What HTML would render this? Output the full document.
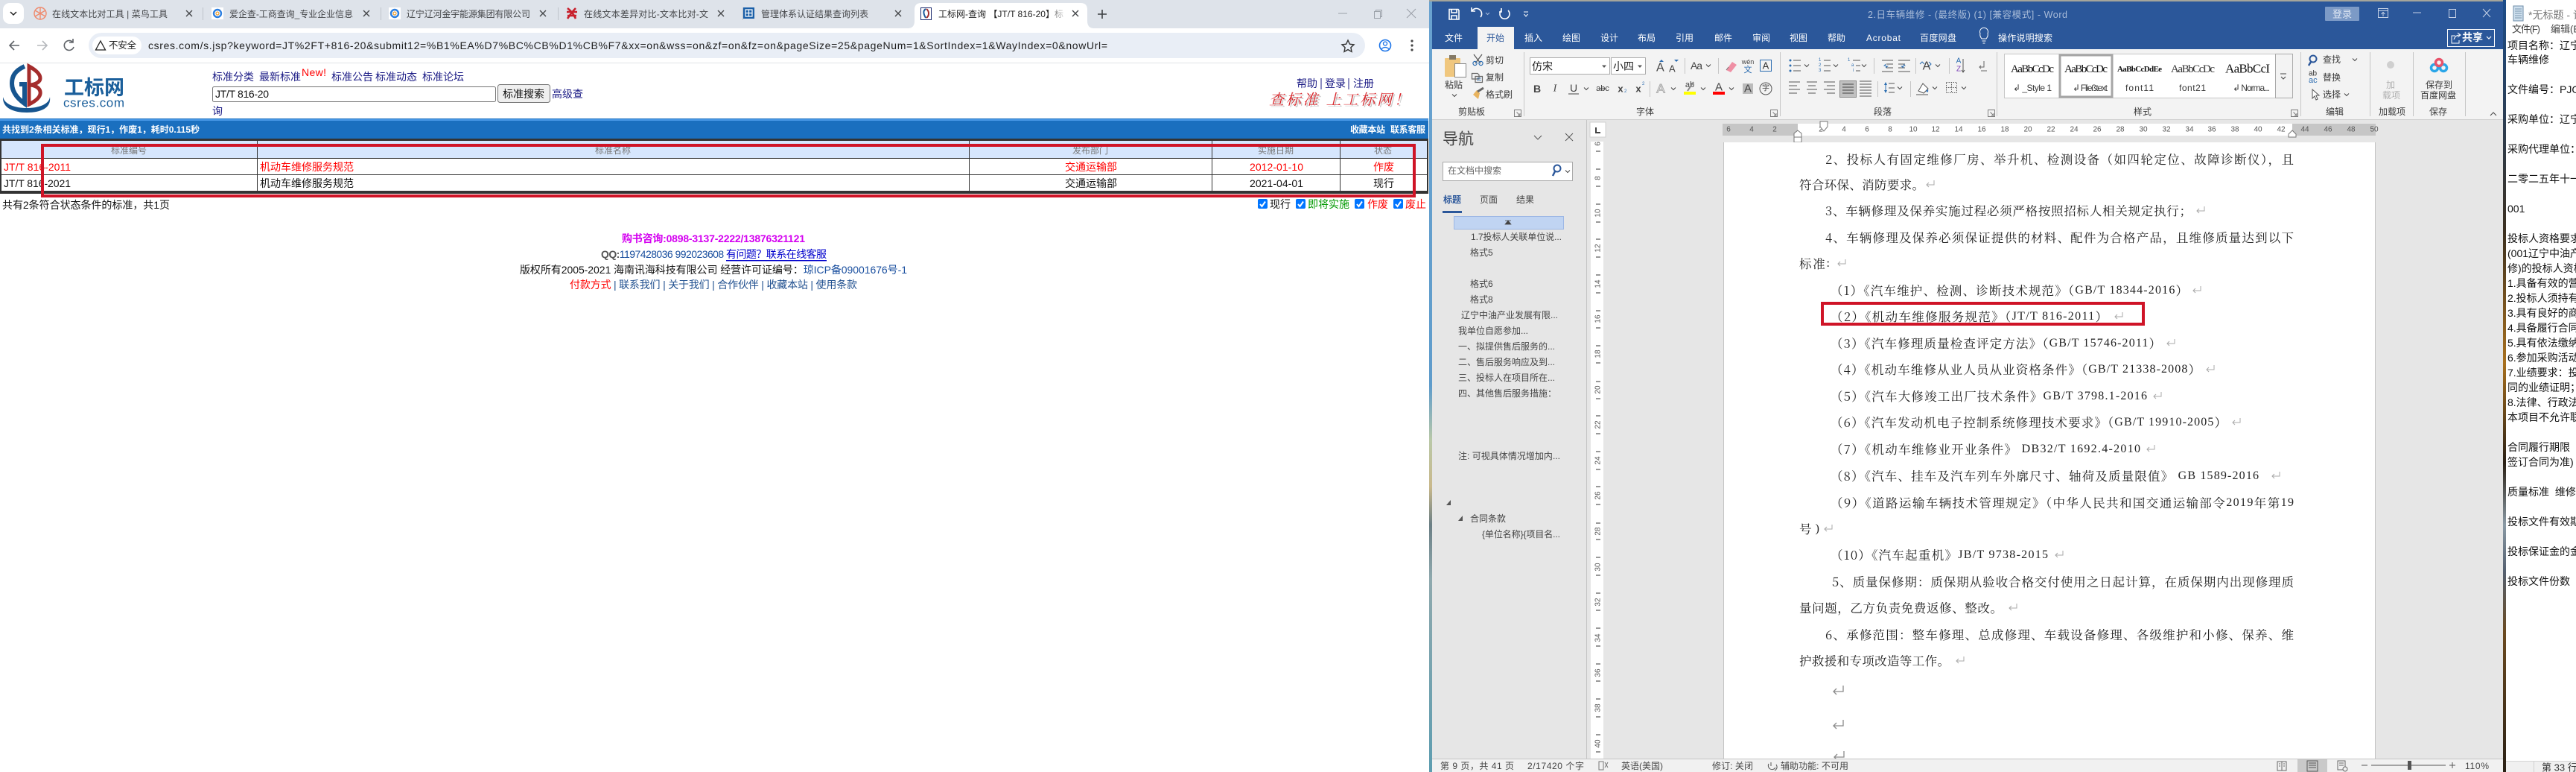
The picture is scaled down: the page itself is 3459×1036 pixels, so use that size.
<!DOCTYPE html>
<html lang="zh-CN"><head><meta charset="utf-8"><title>screenshot</title>
<style>
html,body{margin:0;padding:0;width:3459px;height:1036px;overflow:hidden;background:#fff}
svg{display:block;font-family:"Liberation Sans","Noto Sans CJK SC",sans-serif}
text{dominant-baseline:central;white-space:pre}
.m{font-family:"Liberation Serif",serif;font-size:16px}
.doc{font-family:"Noto Serif CJK SC",serif;font-size:16.5px;fill:#222}
.rib text{font-size:12px;fill:#3a3a3a}
.rul text{font-size:10px;fill:#555;text-anchor:middle}
.nav text{font-size:12px;fill:#444}
.np text{font-size:14px;fill:#111}
.tab text{font-size:12px;fill:#fff}
.st text{font-size:12px;fill:#444}
.tt text{font-size:12px;fill:#45474a}
</style></head><body>
<svg xmlns="http://www.w3.org/2000/svg" width="3459" height="1036" viewBox="0 0 3459 1036">
<defs>
<linearGradient id="w1" x1="0" y1="0" x2="0" y2="1"><stop offset="0" stop-color="#6aa3d0"/><stop offset=".5" stop-color="#5f9ccb"/><stop offset=".57" stop-color="#b9c8a8"/><stop offset=".63" stop-color="#c9b98c"/><stop offset=".68" stop-color="#6b7f85"/><stop offset=".75" stop-color="#8fa9ae"/><stop offset="1" stop-color="#5d9db0"/></linearGradient>
<linearGradient id="w2" x1="0" y1="0" x2="0" y2="1"><stop offset="0" stop-color="#1c4d8a"/><stop offset=".3" stop-color="#3c3020"/><stop offset=".47" stop-color="#a8701f"/><stop offset=".6" stop-color="#2a2015"/><stop offset=".68" stop-color="#8a9aa5"/><stop offset=".74" stop-color="#556070"/><stop offset=".82" stop-color="#6b4a20"/><stop offset="1" stop-color="#2a2015"/></linearGradient>
<linearGradient id="fade" x1="0" x2="1"><stop offset="0" stop-color="#fff" stop-opacity="0"/><stop offset="1" stop-color="#fff"/></linearGradient>
<path id="r" d="M5 -5V1H-5M-2 -2L-5 1L-2 4" fill="none" stroke="#a8a8a8" stroke-width="1"/>
<path id="rb" d="M6 -7V1H-7M-3 -3L-7 1L-3 5" fill="none" stroke="#8a8a8a" stroke-width="1.3"/>
<path id="c" d="M-3 -1.5L0 1.5L3 -1.5" fill="none" stroke="#444" stroke-width="1"/>
<path id="l" d="M-4.5 -4.5H4.5V4.5H-4.5ZM-1.5 -1.5L3 3M3 0V3H0" fill="none" stroke="#777" stroke-width=".9"/>
<g id="cb"><rect width="13" height="13" rx="2" fill="#0075ff"/><path d="M3 7L5.5 10L10 3.5" fill="none" stroke="#fff" stroke-width="2"/></g>
<path id="x" d="M-4 -4L4 4M4 -4L-4 4" fill="none" stroke="#45474a" stroke-width="1.4"/>
</defs>

<!-- BROWSER -->
<rect x="0" y="0" width="1919" height="38" fill="#dee3ea"/>
<rect x="0" y="38" width="1919" height="46" fill="#fff"/>
<rect x="0" y="84" width="1919" height="1" fill="#e1e3e6"/>
<rect x="4" y="4" width="28" height="28" rx="9" fill="#fff"/>
<path d="M14 16L18 20L22 16" fill="none" stroke="#222" stroke-width="1.5"/>
<g fill="#bfc4cb"><rect x="272" y="10" width="1" height="17"/><rect x="511" y="10" width="1" height="17"/><rect x="749" y="10" width="1" height="17"/><rect x="997" y="10" width="1" height="17"/></g>
<g fill="none" stroke="#ef8a6d" stroke-width="1.4"><circle cx="54" cy="18" r="8"/><path d="M54 10V26M47 14L61 22M61 14L47 22"/></g>
<rect x="284" y="10" width="16" height="16" fill="#fff"/><circle cx="292" cy="18" r="5" fill="none" stroke="#2d7fe0" stroke-width="2.4"/><circle cx="292" cy="18" r="2" fill="none" stroke="#f0a030" stroke-width="1.2"/>
<rect x="522" y="10" width="16" height="16" fill="#fff"/><circle cx="530" cy="18" r="5" fill="none" stroke="#2d7fe0" stroke-width="2.4"/><circle cx="530" cy="18" r="2" fill="none" stroke="#f0a030" stroke-width="1.2"/>
<path d="M762 11C766 14 769 17 773 25M773 11C769 15 766 19 762 25M761 16H775M762 21H774" fill="none" stroke="#c8202c" stroke-width="2.6"/>
<rect x="998" y="10" width="15" height="15" fill="#1a5fa8"/><path d="M1001 13H1010V22H1001ZM1001 17.5H1010M1005.5 13V22" fill="none" stroke="#fff" stroke-width="1.2"/>
<path d="M1219 38Q1228 38 1228 28V13Q1228 4 1237 4H1451Q1460 4 1460 13V28Q1460 38 1469 38Z" fill="#fff"/>
<rect x="1236.5" y="10.5" width="14" height="16" fill="#fff" stroke="#1c2a6e"/><path d="M1243 12C1240 14 1239 17 1243 24" fill="none" stroke="#1a5a9a" stroke-width="2"/><path d="M1244 12C1248 15 1248 21 1244 24" fill="none" stroke="#a02a2a" stroke-width="2"/>
<g class="tt">
<text x="70" y="19" textLength="155">在线文本比对工具 | 菜鸟工具</text>
<text x="308" y="19" textLength="166">爱企查-工商查询_专业企业信息</text>
<text x="546" y="19" textLength="166">辽宁辽河金宇能源集团有限公司</text>
<text x="784" y="19" textLength="167">在线文本差异对比-文本比对-文</text>
<text x="1022" y="19" textLength="144">管理体系认证结果查询列表</text>
<text x="1260" y="19" textLength="168" style="fill:#222">工标网-查询 【JT/T 816-20】标</text>
</g>
<rect x="1405" y="8" width="28" height="24" fill="url(#fade)"/>
<use href="#x" x="254" y="18"/><use href="#x" x="492" y="18"/><use href="#x" x="729" y="18"/><use href="#x" x="968" y="18"/><use href="#x" x="1206" y="18"/><use href="#x" x="1444" y="18"/>
<path d="M1480 13V25M1474 19H1486" stroke="#3c4043" stroke-width="1.6"/>
<path d="M1797 18H1809" stroke="#9aa0a8" stroke-width="1"/>
<path d="M1845.5 15.5H1853.5V24.5H1845.5ZM1847.5 15.5V13.5H1855.5V22.5H1853.5" fill="none" stroke="#9aa0a8"/>
<path d="M1889 12L1901 24M1901 12L1889 24" stroke="#9aa0a8"/>
<path d="M26 61H14M19 55L13 61L19 67" fill="none" stroke="#5f6368" stroke-width="1.6"/>
<path d="M50 61H62M57 55L63 61L57 67" fill="none" stroke="#b5b8bc" stroke-width="1.6"/>
<path d="M97 56A6.5 6.5 0 1 0 99 63M98 52V57H93" fill="none" stroke="#5f6368" stroke-width="1.6"/>
<rect x="119" y="44" width="1714" height="34" rx="17" fill="#e9eef6"/>
<rect x="124" y="49" width="66" height="24" rx="12" fill="#fff"/>
<path d="M135 55L141.5 67H128.5Z" fill="none" stroke="#222" stroke-width="1.3"/>
<text x="146" y="61" font-size="12.5" fill="#222" textLength="37">不安全</text>
<text x="199" y="61" font-size="14" fill="#1f1f1f" textLength="1288">csres.com/s.jsp?keyword=JT%2FT+816-20&amp;submit12=%B1%EA%D7%BC%CB%D1%CB%F7&amp;xx=on&amp;wss=on&amp;zf=on&amp;fz=on&amp;pageSize=25&amp;pageNum=1&amp;SortIndex=1&amp;WayIndex=0&amp;nowUrl=</text>
<path d="M1810 54L1812.4 59.2L1818 59.9L1813.9 63.7L1815 69.4L1810 66.6L1805 69.4L1806.1 63.7L1802 59.9L1807.6 59.2Z" fill="none" stroke="#333" stroke-width="1.4"/>
<circle cx="1860" cy="61" r="7.5" fill="none" stroke="#1a73e8" stroke-width="1.6"/><circle cx="1860" cy="58.5" r="2.5" fill="none" stroke="#1a73e8" stroke-width="1.3"/><path d="M1855 65.5Q1860 61.5 1865 65.5" fill="none" stroke="#1a73e8" stroke-width="1.3"/>
<g fill="#444"><circle cx="1896" cy="55" r="1.6"/><circle cx="1896" cy="61" r="1.6"/><circle cx="1896" cy="67" r="1.6"/></g>

<!-- site header -->
<path d="M33 89C20 95 16 102 16 112C16 125 26 134 33 139V113H26" fill="none" stroke="#17558f" stroke-width="6"/>
<path d="M39 89C50 95 54 100 54 105C54 110 48 113 41 114C50 115 55 120 54 126C53 132 45 137 39 140Z" fill="none" stroke="#a42c2c" stroke-width="5"/>
<path d="M4 130C3 145 18 151 36 151C55 151 69 145 67 130C66 140 52 145 36 145C20 145 6 140 4 130Z" fill="#17558f"/>
<text x="86" y="118" font-size="27" font-weight="700" fill="#1b5f9b" textLength="81">工标网</text>
<text x="85" y="138" font-size="17" fill="#1b5f9b" textLength="82">csres.com</text>
<g font-size="14" fill="#1b1b85">
<text x="285" y="103" textLength="56">标准分类</text><text x="348" y="103" textLength="56">最新标准</text>
<text x="445" y="103" textLength="56">标准公告</text><text x="504" y="103" textLength="56">标准动态</text><text x="567" y="103" textLength="56">标准论坛</text>
<text x="741" y="126" textLength="42">高级查</text><text x="285" y="149">询</text>
<text x="1741" y="112" textLength="28">帮助</text><text x="1779" y="112" textLength="28">登录</text><text x="1817" y="112" textLength="28">注册</text>
</g>
<path d="M1774 105V120M1811 105V120" stroke="#1b1b85" stroke-width="1"/>
<text x="405" y="97" font-size="14" fill="#f00" textLength="33">New!</text>
<rect x="285.5" y="116.5" width="380" height="20" rx="2" fill="#fff" stroke="#767676"/>
<text x="289" y="126" font-size="14" fill="#111" textLength="72">JT/T 816-20</text>
<rect x="668.5" y="113.5" width="70" height="24" rx="3" fill="#efefef" stroke="#767676"/>
<text x="703" y="126" font-size="14" fill="#111" text-anchor="middle">标准搜索</text>
<g font-family='"Noto Serif CJK SC",serif' font-size="20" font-style="italic">
<text x="1706" y="134" fill="#c9c9c9" textLength="188">查标准 上工标网！</text>
<text x="1704" y="132" fill="#d8252a" textLength="188">查标准 上工标网！</text>
</g>
<rect x="0" y="159" width="1918" height="27" fill="#1a6fbf"/><rect x="0" y="160" width="1918" height="2" fill="#4a9ae8"/>
<g font-size="12" font-weight="700" fill="#fff">
<text x="3" y="174" textLength="265">共找到2条相关标准，现行1，作废1，耗时0.115秒</text>
<text x="1813" y="174" textLength="47">收藏本站</text><text x="1867" y="174" textLength="47">联系客服</text>
</g>
<rect x="0" y="186" width="1918" height="74" fill="#333"/>
<rect x="2" y="189" width="1914" height="67" fill="#fff"/>
<rect x="2" y="189" width="1914" height="23" fill="#d6e6fd"/>
<g fill="#333"><rect x="0" y="212" width="1918" height="1"/><rect x="0" y="234" width="1918" height="1"/><rect x="345" y="189" width="1" height="67"/><rect x="1301" y="189" width="1" height="67"/><rect x="1627" y="189" width="1" height="67"/><rect x="1799" y="189" width="1" height="67"/></g>
<g font-size="12" fill="#777" text-anchor="middle"><text x="173" y="202">标准编号</text><text x="823" y="202">标准名称</text><text x="1464" y="202">发布部门</text><text x="1713" y="202">实施日期</text><text x="1857" y="202">状态</text></g>
<g font-size="14" fill="#f00"><text x="5" y="224" textLength="90">JT/T 816-2011</text><text x="349" y="224">机动车维修服务规范</text><text x="1430" y="224">交通运输部</text><text x="1678" y="224" textLength="72">2012-01-10</text><text x="1844" y="224">作废</text></g>
<g font-size="14" fill="#111"><text x="5" y="246" textLength="90">JT/T 816-2021</text><text x="349" y="246">机动车维修服务规范</text><text x="1430" y="246">交通运输部</text><text x="1678" y="246" textLength="72">2021-04-01</text><text x="1844" y="246">现行</text></g>
<rect x="57" y="195" width="1842" height="68" fill="none" stroke="#cf1427" stroke-width="4"/>
<text x="3" y="275" font-size="14" fill="#111" textLength="225">共有2条符合状态条件的标准，共1页</text>
<use href="#cb" x="1689" y="267"/><use href="#cb" x="1740" y="267"/><use href="#cb" x="1819" y="267"/><use href="#cb" x="1871" y="267"/>
<g font-size="14"><text x="1705" y="274" fill="#111">现行</text><text x="1756" y="274" fill="#090">即将实施</text><text x="1836" y="274" fill="#f00">作废</text><text x="1887" y="274" fill="#f00">废止</text></g>
<text x="835" y="320" font-size="14" font-weight="700" fill="#d400f0" textLength="246">购书咨询:0898-3137-2222/13876321121</text>
<text x="807" y="341" font-size="14" fill="#1a4f9f" textLength="303"><tspan font-weight="700" fill="#555">QQ:</tspan>1197428036 992023608 <tspan fill="#00c" text-decoration="underline">有问题？联系在线客服</tspan></text>
<text x="698" y="362" font-size="14" fill="#111" textLength="520">版权所有2005-2021 海南讯海科技有限公司 经营许可证编号：<tspan fill="#1a4f9f">琼ICP备09001676号-1</tspan></text>
<text x="765" y="382" font-size="14" fill="#1f4f8f" textLength="386"><tspan fill="#f00">付款方式</tspan> | 联系我们 | 关于我们 | 合作伙伴 | 收藏本站 | 使用条款</text>

<!-- WALLPAPER STRIPS -->
<rect x="1919" y="0" width="4" height="1036" fill="url(#w1)"/>
<rect x="1919" y="0" width="1445" height="2" fill="#a5a59b"/>
<rect x="3361" y="0" width="4" height="1036" fill="url(#w2)"/>

<!-- WORD -->
<rect x="1923" y="2" width="1438" height="64" fill="#2b579a"/>
<rect x="1923" y="66" width="1438" height="94" fill="#f3f3f3"/>
<rect x="1923" y="160" width="1438" height="1" fill="#cfcfcf"/>
<rect x="1923" y="161" width="1438" height="857" fill="#e6e6e6"/>
<g fill="none" stroke="#fff" stroke-width="1.6"><path d="M1946 12.5H1958L1959 14V26H1946ZM1949 12.5V17H1956V12.5M1949 26V21H1956V26"/><path d="M1988 23A6.5 6.5 0 1 0 1977 14M1976 10V15H1981"/><path d="M2025 14A6.5 6.5 0 1 1 2016 14M2016 11V16H2013"/></g>
<path d="M1995 17L1997.5 19.5L2000 17" fill="none" stroke="#a9bcd9"/>
<path d="M2046 16H2052M2046.5 19L2049 22L2051.5 19" fill="none" stroke="#fff"/>
<text x="2508" y="20" font-size="12.5" fill="#a9bcd9" textLength="268">2.日车辆维修 - (最终版) (1) [兼容模式] - Word</text>
<rect x="3122" y="9" width="46" height="19" rx="1" fill="#7c9ac6"/><text x="3145" y="19" font-size="13" fill="#dfe7f3" text-anchor="middle">登录</text>
<g fill="none" stroke="#c6d2e6" stroke-width="1"><path d="M3193.5 11.5H3206.5V23.5H3193.5ZM3193.5 14.5H3206.5M3200 22V17M3197.5 19L3200 16.5L3202.5 19"/><path d="M3240 17H3251"/><path d="M3288.5 12.5H3297.5V23.5H3288.5Z"/><path d="M3334 12L3344 23M3344 12L3334 23"/></g>
<rect x="1984" y="36" width="49" height="30" fill="#f3f3f3"/>
<g class="tab">
<text x="1940" y="51">文件</text><text x="1996" y="51" style="fill:#2b579a">开始</text><text x="2047" y="51">插入</text><text x="2098" y="51">绘图</text><text x="2149" y="51">设计</text><text x="2199" y="51">布局</text><text x="2250" y="51">引用</text><text x="2302" y="51">邮件</text><text x="2353" y="51">审阅</text><text x="2403" y="51">视图</text><text x="2454" y="51">帮助</text><text x="2506" y="51" textLength="46">Acrobat</text><text x="2578" y="51" textLength="49">百度网盘</text><text x="2683" y="51" textLength="73">操作说明搜索</text>
</g>
<path d="M2661 52Q2658 48 2659 45A5.5 5.5 0 1 1 2669 45Q2670 48 2667 52ZM2661.5 55H2666.5M2662.5 58H2665.5" fill="none" stroke="#fff"/>
<rect x="3286.5" y="39.5" width="63" height="23" fill="none" stroke="#fff"/>
<path d="M3297 48H3292V58H3302V54M3295 53Q3297 47 3303 47M3300 44L3304 47L3300 50" fill="none" stroke="#fff"/>
<text x="3306" y="50" font-size="14" font-weight="700" fill="#fff">共享</text>
<path d="M3339 49L3342 52L3345 49" fill="none" stroke="#fff" stroke-width="1.2"/>
<g fill="#c6c6c6"><rect x="2046" y="70" width="1" height="86"/><rect x="2390" y="70" width="1" height="86"/><rect x="2681" y="70" width="1" height="86"/><rect x="3089" y="70" width="1" height="86"/><rect x="3182" y="70" width="1" height="86"/><rect x="3240" y="70" width="1" height="86"/><rect x="3310" y="70" width="1" height="86"/></g>
<rect x="1940" y="78" width="21" height="25" rx="1" fill="#f0c77e"/><rect x="1946" y="74" width="9" height="6" fill="#857a66"/><rect x="1953.5" y="85.5" width="15" height="18" fill="#fff" stroke="#888"/>
<g fill="none" stroke-width="1.2"><path d="M1979 73L1988 85M1990 73L1981 85" stroke="#555"/><circle cx="1980.5" cy="85" r="2.6" stroke="#2b6cb0"/><circle cx="1988.5" cy="85" r="2.6" stroke="#2b6cb0"/><path d="M1976.5 98.5H1984L1986 100.5V106H1976.5ZM1981 102.5H1990.5V110.5H1981Z" stroke="#666"/><path d="M1983 105H1989M1983 107.5H1989" stroke="#2b6cb0" stroke-width=".8"/></g>
<path d="M1978 127L1985 133L1987 125L1983 121Z" fill="#e9b45f"/><path d="M1984 123L1992 118" stroke="#666" stroke-width="3"/>
<use href="#c" x="1953" y="128"/>
<rect x="2054.5" y="77.5" width="107" height="22" fill="#fff" stroke="#ababab"/><rect x="2163.5" y="77.5" width="46" height="22" fill="#fff" stroke="#ababab"/>
<path d="M2151 87.5H2157L2154 91ZM2199 87.5H2205L2202 91Z" fill="#555"/>
<g class="rib">
<text x="1940" y="114">粘贴</text><text x="1995" y="81">剪切</text><text x="1995" y="104">复制</text><text x="1995" y="127">格式刷</text><text x="1958" y="150">剪贴板</text>
<text x="2197" y="150">字体</text><text x="2516" y="150">段落</text><text x="2865" y="150">样式</text><text x="3119" y="80">查找</text><text x="3119" y="104">替换</text><text x="3119" y="127">选择</text><text x="3123" y="150">编辑</text>
<text x="3204" y="114" style="fill:#b0b0b0">加</text><text x="3199" y="128" style="fill:#b0b0b0">载项</text><text x="3194" y="150">加载项</text>
<text x="3257" y="114">保存到</text><text x="3250" y="128">百度网盘</text><text x="3262" y="150">保存</text>
<text x="2057" y="89" style="font-size:14px;fill:#222">仿宋</text><text x="2166" y="89" style="font-size:14px;fill:#222">小四</text>
</g>
<use href="#l" x="2038" y="152"/><use href="#l" x="2382" y="152"/><use href="#l" x="2674" y="152"/><use href="#l" x="3081" y="152"/>
<g fill="#444" font-family="Liberation Sans"><text x="2224" y="91" font-size="16">A</text><text x="2241" y="92" font-size="13">A</text><text x="2270" y="88" font-size="14" textLength="16">Aa</text><text x="2064" y="119" font-size="14" font-weight="700" text-anchor="middle">B</text><text x="2088" y="119" font-size="14" font-style="italic" text-anchor="middle" font-family="Liberation Serif">I</text><text x="2113" y="118" font-size="14" text-anchor="middle">U</text><text x="2152" y="119" font-size="11" text-anchor="middle">abc</text><text x="2176" y="119" font-size="13" font-weight="700" text-anchor="middle">x</text><text x="2200" y="119" font-size="13" font-weight="700" text-anchor="middle">x</text><text x="2308" y="117" font-size="15" text-anchor="middle">A</text></g>
<path d="M2231 80L2234 83H2228ZM2251 83L2254 80H2248" fill="#2b6cb0"/>
<path d="M2106 126H2120" stroke="#444"/><path d="M2148 119H2156" stroke="#444"/>
<text x="2181" y="123" font-size="6" fill="#2b6cb0">2</text><text x="2205" y="113" font-size="6" fill="#2b6cb0">2</text>
<g fill="#c6c6c6"><rect x="2262" y="78" width="1" height="21"/><rect x="2307" y="78" width="1" height="21"/><rect x="2215" y="109" width="1" height="21"/></g>
<path d="M2318 94L2326 83L2332 87L2324 97Z" fill="#ef8fa4"/><path d="M2318 94L2321 90" stroke="#777"/>
<text x="2347" y="83" font-size="9" fill="#444" text-anchor="middle">wén</text><text x="2347" y="94" font-size="11" fill="#2b6cb0" text-anchor="middle">文</text>
<rect x="2363.5" y="80.5" width="15" height="15" fill="none" stroke="#2b6cb0"/><text x="2371" y="88" font-size="13" fill="#333" text-anchor="middle">A</text>
<text x="2230" y="119" font-size="17" fill="#fff" stroke="#aaa" text-anchor="middle" font-family="Liberation Sans">A</text>
<text x="2269" y="114" font-size="11" fill="#444" text-anchor="middle">ab</text><path d="M2266 122L2274 110" stroke="#888" stroke-width="2"/><rect x="2261" y="123" width="16" height="4" fill="#ff0"/><rect x="2300" y="123" width="16" height="4" fill="#f00"/>
<rect x="2340" y="112" width="14" height="14" fill="#bbb"/><text x="2347" y="119" font-size="15" fill="#444" text-anchor="middle">A</text>
<circle cx="2371" cy="119" r="8" fill="none" stroke="#555"/><text x="2371" y="119" font-size="10" fill="#444" text-anchor="middle">字</text>
<use href="#c" x="2130" y="119"/><use href="#c" x="2247" y="119"/><use href="#c" x="2287" y="119"/><use href="#c" x="2325" y="119"/><use href="#c" x="2294" y="88"/>
<g fill="none" stroke="#555" stroke-width="1">
<path d="M2408 81H2418M2408 88H2418M2408 95H2418"/><path d="M2449 81H2458M2449 88H2458M2449 95H2458"/><path d="M2488 81H2498M2492 88H2498M2492 95H2498"/>
<path d="M2527 81H2542M2533 86H2542M2533 91H2542M2527 96H2542"/><path d="M2549 81H2565M2549 86H2558M2549 91H2558M2549 96H2565"/>
<path d="M2402 110H2417M2402 115H2413M2402 120H2417M2402 125H2413"/><path d="M2426 110H2440M2428 115H2438M2426 120H2440M2428 125H2438"/><path d="M2449 110H2464M2453 115H2464M2449 120H2464M2453 125H2464"/>
<path d="M2497 109H2513M2497 113H2513M2497 117H2513M2497 121H2513M2497 125H2513M2497 129H2513"/>
<path d="M2536 112H2544M2536 118H2544M2536 124H2544"/><path d="M2613.5 110.5H2627.5V124.5H2613.5ZM2613 117.5H2628M2620.5 110V125" stroke-dasharray="1.5 1.5"/>
</g>
<g fill="#2b6cb0"><circle cx="2404" cy="81" r="1.5"/><circle cx="2404" cy="88" r="1.5"/><circle cx="2404" cy="95" r="1.5"/><path d="M2536 88.5L2529 88.5L2532 85.5V91.5ZM2552 88.5H2559L2556 85.5V91.5Z"/><path d="M2530 114L2532 110L2534 114ZM2530 121L2532 125L2534 121Z"/></g>
<path d="M2532 112V124" stroke="#2b6cb0"/>
<g font-size="6" fill="#2b6cb0"><text x="2442" y="81">1</text><text x="2442" y="88">2</text><text x="2442" y="95">3</text><text x="2481" y="81">1</text><text x="2486" y="88">a</text><text x="2488" y="95">i</text></g>
<rect x="2470.5" y="108.5" width="22" height="22" fill="#c0c0c0" stroke="#8a8a8a"/>
<path d="M2474 113H2489M2474 117H2489M2474 121H2489M2474 125H2489" stroke="#444"/>
<text x="2587" y="89" font-size="16" fill="#444" text-anchor="middle">A</text><path d="M2578 86L2581 83L2584 86M2590 83L2593 86L2590 89" fill="none" stroke="#2b6cb0"/>
<text x="2630" y="82" font-size="10" fill="#2b6cb0" text-anchor="middle">A</text><text x="2630" y="93" font-size="10" fill="#7a3fb5" text-anchor="middle">Z</text><path d="M2636 79V97M2634 94L2636 97L2638 94" fill="none" stroke="#555"/>
<path d="M2664 82V90H2658M2660 88L2658 90L2660 92M2660 95H2668" fill="none" stroke="#666"/>
<path d="M2576 122L2582 112L2589 119L2583 125ZM2573 127H2589" fill="#fff" stroke="#555"/><path d="M2586 122Q2590 126 2589 120" fill="#3a7ac0"/>
<g fill="#c6c6c6"><rect x="2516" y="78" width="1" height="21"/><rect x="2572" y="78" width="1" height="21"/><rect x="2617" y="78" width="1" height="21"/><rect x="2521" y="109" width="1" height="21"/><rect x="2565" y="109" width="1" height="21"/></g>
<use href="#c" x="2426" y="88"/><use href="#c" x="2465" y="88"/><use href="#c" x="2503" y="88"/><use href="#c" x="2602" y="88"/><use href="#c" x="2551" y="118"/><use href="#c" x="2598" y="118"/><use href="#c" x="2637" y="118"/>
<rect x="2691.5" y="72.5" width="387" height="59" fill="#fff" stroke="#c6c6c6"/>
<rect x="3055.5" y="72.5" width="23" height="59" fill="#f3f3f3" stroke="#aaa"/>
<rect x="2766" y="74" width="70" height="56" fill="#fff" stroke="#a6a6a6" stroke-width="3"/>
<path d="M3062 99H3070M3063 103L3066 106L3069 103" fill="none" stroke="#444"/>
<g font-family="Liberation Serif" fill="#111"><text x="2700" y="93" font-size="15" textLength="58">AaBbCcDc</text><text x="2772" y="93" font-size="15" textLength="58">AaBbCcDc</text><text x="2843" y="93" font-size="11" font-weight="700" textLength="60">AaBbCcDdEe</text><text x="2915" y="93" font-size="15" textLength="59" fill="#333">AaBbCcDc</text><text x="2988" y="92" font-size="17" textLength="60">AaBbCcI</text></g>
<g class="rib"><text x="2703" y="118" textLength="52">↲ _Style 1</text><text x="2783" y="118" textLength="47">↲ Fließtext</text><text x="2854" y="118" textLength="38">font11</text><text x="2926" y="118" textLength="36">font21</text><text x="2998" y="118" textLength="50">↲ Norma...</text></g>
<circle cx="3106" cy="79" r="4.5" fill="none" stroke="#2b579a" stroke-width="2"/><path d="M3103 83L3100 88" stroke="#2b579a" stroke-width="2.5"/>
<text x="3100" y="99" font-size="10" fill="#333">ab</text><text x="3100" y="108" font-size="11" fill="#2b6cb0">ac</text>
<path d="M3105 120V132L3108 129L3110 134L3112 133L3110 128H3114Z" fill="#fff" stroke="#555"/>
<use href="#c" x="3162" y="80"/><use href="#c" x="3151" y="127"/>
<circle cx="3210" cy="87" r="5" fill="#cfcfcf"/>
<g fill="none" stroke-width="3.5"><circle cx="3269" cy="91" r="4.5" stroke="#2aa6e8"/><circle cx="3281" cy="91" r="4.5" stroke="#2aa6e8"/><circle cx="3275" cy="84" r="4.5" stroke="#e8536a"/></g>
<path d="M3344 155L3348 151L3352 155" fill="none" stroke="#444"/>

<!-- Nav pane -->
<rect x="2130" y="161" width="1" height="857" fill="#c4c4c4"/>
<text x="1937" y="187" font-size="21" fill="#444">导航</text>
<path d="M2060 182L2065 187L2070 182M2102 179L2112 189M2112 179L2102 189" fill="none" stroke="#555"/>
<rect x="1937.5" y="217.5" width="174" height="25" fill="#fff" stroke="#aaa"/>
<g class="nav">
<text x="1944" y="229" style="fill:#666">在文档中搜索</text>
<text x="1938" y="268" font-weight="700" style="fill:#2b579a">标题</text><text x="1987" y="268">页面</text><text x="2036" y="268">结果</text>
<text x="1975" y="318" textLength="122">1.7投标人关联单位说...</text>
<text x="1974" y="339">格式5</text><text x="1974" y="381">格式6</text><text x="1974" y="402">格式8</text>
<text x="1962" y="423" textLength="130">辽宁中油产业发展有限...</text>
<text x="1958" y="444" textLength="94">我单位自愿参加...</text>
<text x="1958" y="465" textLength="130">一、拟提供售后服务的...</text>
<text x="1958" y="486" textLength="130">二、售后服务响应及到...</text>
<text x="1958" y="507" textLength="130">三、投标人在项目所在...</text>
<text x="1958" y="528">四、其他售后服务措施：</text>
<text x="1958" y="612" textLength="137">注: 可视具体情况增加内...</text>
<text x="1974" y="696">合同条款</text>
<text x="1990" y="717" textLength="105">{单位名称}{项目名...</text>
</g>
<circle cx="2091" cy="226" r="4.5" fill="none" stroke="#2b579a" stroke-width="2"/><path d="M2088 230L2085 236" stroke="#2b579a" stroke-width="2.5"/>
<use href="#c" x="2105" y="230"/>
<rect x="1937" y="283" width="26" height="3" fill="#2b579a"/>
<rect x="1952.5" y="290.5" width="147" height="17" fill="#c0d4f2" stroke="#9db7e5"/>
<path d="M2025 296L2029 301H2021ZM2021 296H2029" fill="#444" stroke="#444" stroke-width=".7"/>
<path d="M1942 678H1948V671Z" fill="#555"/><path d="M1958 699H1964V692Z" fill="#555"/>

<!-- Rulers -->
<rect x="2135" y="164" width="21" height="20" fill="#fff" stroke="#d0d0d0"/>
<path d="M2143 171V178H2149" fill="none" stroke="#444" stroke-width="2"/>
<rect x="2136" y="190" width="17" height="828" fill="#fff"/>
<path d="M2143 203h6M2143 227h6M2143 250h6M2143 274h6M2143 298h6M2143 321h6M2143 345h6M2143 369h6M2143 393h6M2143 417h6M2143 440h6M2143 464h6M2143 487h6M2143 512h6M2143 535h6M2143 558h6M2143 582h6M2143 606h6M2143 630h6M2143 653h6M2143 677h6M2143 702h6M2143 724h6M2143 748h6M2143 772h6M2143 796h6M2143 819h6M2143 843h6M2143 867h6M2143 891h6M2143 914h6M2143 938h6M2143 962h6M2143 986h6M2143 1009h6" stroke="#333" fill="none"/>
<g class="rul">
<text transform="translate(2146,193) rotate(-90)">6</text><text transform="translate(2146,239) rotate(-90)">8</text><text transform="translate(2146,286) rotate(-90)">10</text><text transform="translate(2146,333) rotate(-90)">12</text><text transform="translate(2146,381) rotate(-90)">14</text><text transform="translate(2146,428) rotate(-90)">16</text><text transform="translate(2146,475) rotate(-90)">18</text><text transform="translate(2146,523) rotate(-90)">20</text><text transform="translate(2146,570) rotate(-90)">22</text><text transform="translate(2146,618) rotate(-90)">24</text><text transform="translate(2146,665) rotate(-90)">26</text><text transform="translate(2146,713) rotate(-90)">28</text><text transform="translate(2146,761) rotate(-90)">30</text><text transform="translate(2146,808) rotate(-90)">32</text><text transform="translate(2146,856) rotate(-90)">34</text><text transform="translate(2146,903) rotate(-90)">36</text><text transform="translate(2146,950) rotate(-90)">38</text><text transform="translate(2146,998) rotate(-90)">40</text>
</g>
<rect x="2313" y="166" width="877" height="16" fill="#c6c6c6"/><rect x="2414" y="166" width="664" height="16" fill="#fff"/>
<g class="rul">
<text x="2321" y="174">6</text><text x="2352" y="174">4</text><text x="2383" y="174">2</text><text x="2445" y="174">2</text><text x="2476" y="174">4</text><text x="2507" y="174">6</text><text x="2538" y="174">8</text><text x="2569" y="174">10</text><text x="2599" y="174">12</text><text x="2630" y="174">14</text><text x="2661" y="174">16</text><text x="2692" y="174">18</text><text x="2723" y="174">20</text><text x="2754" y="174">22</text><text x="2785" y="174">24</text><text x="2816" y="174">26</text><text x="2847" y="174">28</text><text x="2878" y="174">30</text><text x="2909" y="174">32</text><text x="2940" y="174">34</text><text x="2970" y="174">36</text><text x="3001" y="174">38</text><text x="3032" y="174">40</text><text x="3063" y="174">42</text><text x="3095" y="174">44</text><text x="3126" y="174">46</text><text x="3157" y="174">48</text><text x="3188" y="174">50</text>
</g>
<path d="M2409 184V179L2414 175L2419 179V184ZM2409 184H2419V191H2409Z" fill="#fff" stroke="#777"/>
<path d="M2444 163H2454V170L2449 176L2444 170Z" fill="#fff" stroke="#777"/>
<path d="M3073 184V180L3078 175L3083 180V184Z" fill="#fff" stroke="#777"/>

<!-- Page -->
<rect x="2314" y="191" width="1" height="827" fill="#c4c4c4"/><rect x="3189" y="191" width="1" height="827" fill="#c4c4c4"/>
<rect x="2315" y="191" width="874" height="827" fill="#fff"/>
<g class="doc">
<text x="2451" y="213" textLength="629">2、投标人有固定维修厂房、举升机、检测设备（如四轮定位、故障诊断仪），且</text>
<text x="2416" y="247" textLength="168">符合环保、消防要求。</text>
<text x="2451" y="282" textLength="492">3、车辆修理及保养实施过程必须严格按照招标人相关规定执行；</text>
<text x="2451" y="318" textLength="629">4、车辆修理及保养必须保证提供的材料、配件为合格产品，且维修质量达到以下</text>
<text x="2416" y="353" textLength="41">标准<tspan class="m">:</tspan></text>
<text x="2458" y="389" textLength="480">（1）《汽车维护、检测、诊断技术规范》（<tspan class="m">GB/T 18344-2016</tspan>）</text>
<text x="2458" y="424" textLength="372">（2）《机动车维修服务规范》（<tspan class="m">JT/T 816-2011</tspan>）</text>
<text x="2458" y="460" textLength="444">（3）《汽车修理质量检查评定方法》（<tspan class="m">GB/T 15746-2011</tspan>）</text>
<text x="2458" y="495" textLength="497">（4）《机动车维修从业人员从业资格条件》（<tspan class="m">GB/T 21338-2008</tspan>）</text>
<text x="2458" y="531" textLength="425">（5）《汽车大修竣工出厂技术条件》<tspan class="m">GB/T 3798.1-2016</tspan></text>
<text x="2458" y="566" textLength="532">（6）《汽车发动机电子控制系统修理技术要求》（<tspan class="m">GB/T 19910-2005</tspan>）</text>
<text x="2458" y="602" textLength="416">（7）《机动车维修业开业条件》 <tspan class="m">DB32/T 1692.4-2010</tspan></text>
<text x="2458" y="638" textLength="575">（8）《汽车、挂车及汽车列车外廓尺寸、轴荷及质量限值》 <tspan class="m">GB 1589-2016</tspan></text>
<text x="2458" y="674" textLength="622">（9）《道路运输车辆技术管理规定》（中华人民共和国交通运输部令<tspan class="m">2019</tspan>年第<tspan class="m">19</tspan></text>
<text x="2416" y="709" textLength="27">号<tspan class="m">)</tspan></text>
<text x="2458" y="744" textLength="292">（10）《汽车起重机》<tspan class="m">JB/T 9738-2015</tspan></text>
<text x="2460" y="780" textLength="620">5、质量保修期：质保期从验收合格交付使用之日起计算，在质保期内出现修理质</text>
<text x="2416" y="815" textLength="273">量问题，乙方负责免费返修、整改。</text>
<text x="2451" y="851" textLength="629">6、承修范围：整车修理、总成修理、车载设备修理、各级维护和小修、保养、维</text>
<text x="2416" y="886" textLength="202">护救援和专项改造等工作。</text>
</g>
<use href="#r" x="2592" y="247"/><use href="#r" x="2955" y="282"/><use href="#r" x="2473" y="353"/><use href="#r" x="2950" y="389"/><use href="#r" x="2845" y="424"/><use href="#r" x="2915" y="460"/><use href="#r" x="2968" y="495"/><use href="#r" x="2897" y="531"/><use href="#r" x="3003" y="566"/><use href="#r" x="2888" y="602"/><use href="#r" x="3056" y="638"/><use href="#r" x="2455" y="709"/><use href="#r" x="2765" y="744"/><use href="#r" x="2703" y="815"/><use href="#r" x="2632" y="886"/>
<use href="#rb" x="2469" y="927"/><use href="#rb" x="2469" y="973"/><use href="#rb" x="2470" y="1015"/>
<rect x="2447" y="407" width="431" height="28" fill="none" stroke="#cf1427" stroke-width="4"/>

<!-- Status bar -->
<rect x="1923" y="1018" width="1438" height="18" fill="#f1f1f1"/><rect x="1923" y="1018" width="1438" height="1" fill="#c6c6c6"/>
<g class="st">
<text x="1934" y="1028" textLength="99">第 9 页，共 41 页</text><text x="2051" y="1028" textLength="76">2/17420 个字</text><text x="2177" y="1028">英语(美国)</text><text x="2299" y="1028" textLength="55">修订: 关闭</text><text x="2391" y="1028" textLength="91">辅助功能: 不可用</text>
<text x="3310" y="1028" textLength="32">110%</text>
</g>
<path d="M2147 1022H2153V1033H2147ZM2155 1023L2159 1030M2159 1023L2155 1030" fill="none" stroke="#777"/>
<path d="M2378 1023V1028M2375 1025A5 5 0 1 0 2384 1030M2383 1034Q2388 1031 2385 1026" fill="none" stroke="#555"/>
<rect x="3085" y="1019" width="40" height="17" fill="#c9c9c9"/>
<path d="M3058 1022H3070V1034H3058ZM3064 1022V1034M3060 1025H3062M3060 1028H3062M3066 1025H3068M3066 1028H3068" fill="none" stroke="#666"/>
<path d="M3098 1021H3112V1035H3098ZM3100 1024H3110M3100 1027H3110M3100 1030H3110" fill="none" stroke="#555"/>
<path d="M3139 1021H3149V1033H3139ZM3141 1024H3147M3141 1027H3147" fill="none" stroke="#666"/><circle cx="3149" cy="1032" r="3" fill="#f1f1f1" stroke="#666"/>
<path d="M3171 1027H3179M3184 1027H3284M3289 1027H3297M3293 1023V1031" stroke="#555"/><rect x="3233" y="1021" width="5" height="12" fill="#555"/>

<!-- NOTEPAD -->
<rect x="3365" y="0" width="94" height="1036" fill="#fff"/>
<rect x="3375" y="8" width="13" height="20" fill="#cfe0ee" stroke="#6d8da8"/><path d="M3377 12H3386M3377 15H3386M3377 18H3386M3377 21H3386M3377 24H3386" stroke="#7a96ad"/>
<text x="3395" y="20" font-size="14" fill="#777">*无标题 - 记</text>
<text x="3373" y="39" font-size="13" fill="#444" textLength="38">文件(F)</text><text x="3425" y="39" font-size="13" fill="#444">编辑(E</text>
<g class="np">
<text x="3367" y="61">项目名称：辽宁</text><text x="3367" y="80">车辆维修</text><text x="3367" y="120">文件编号：PJG</text><text x="3367" y="160">采购单位：辽宁</text><text x="3367" y="200">采购代理单位：</text><text x="3367" y="240">二零二五年十一</text><text x="3367" y="280">001</text><text x="3367" y="320">投标人资格要求</text><text x="3367" y="340">(001辽宁中油产</text><text x="3367" y="360">修)的投标人资格</text><text x="3367" y="380">1.具备有效的营</text><text x="3367" y="400">2.投标人须持有</text><text x="3367" y="420">3.具有良好的商</text><text x="3367" y="440">4.具备履行合同</text><text x="3367" y="460">5.具有依法缴纳</text><text x="3367" y="480">6.参加采购活动</text><text x="3367" y="500">7.业绩要求：投</text><text x="3367" y="520">同的业绩证明；</text><text x="3367" y="540">8.法律、行政法</text><text x="3367" y="560">本项目不允许联</text><text x="3367" y="600">合同履行期限</text><text x="3367" y="620">签订合同为准)</text><text x="3367" y="660">质量标准  维修</text><text x="3367" y="700">投标文件有效期</text><text x="3367" y="740">投标保证金的金</text><text x="3367" y="780">投标文件份数</text>
</g>
<rect x="3365" y="1021" width="94" height="15" fill="#f0f0f0"/><rect x="3365" y="1021" width="94" height="1" fill="#d5d5d5"/><rect x="3402" y="1022" width="1" height="14" fill="#d0d0d0"/>
<text x="3413" y="1030" font-size="13" fill="#333">第 33 行</text>
</svg>
</body></html>
